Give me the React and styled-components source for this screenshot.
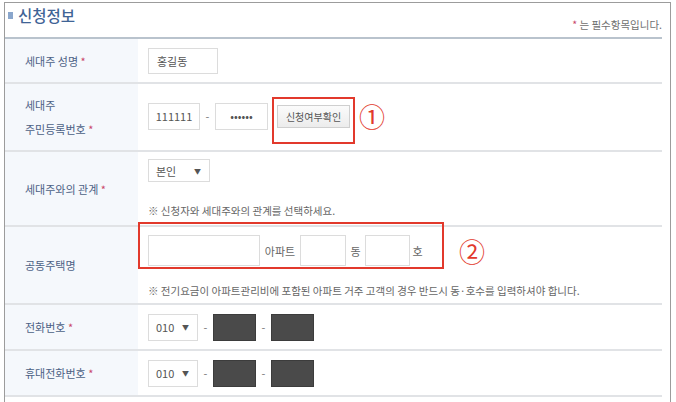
import React from "react"
import styled, { createGlobalStyle } from "styled-components"

const GlobalStyle = createGlobalStyle`
  body {
    margin: 0;
    overflow: hidden;
    background: #fff;
    font-family: "Noto Sans CJK KR", "Noto Sans", sans-serif;
  }
`

const App = () => (
  <>
    <GlobalStyle />
    <Frame>
      <Header>
        <Title>신청정보</Title>
        <Required>
          <Star>*</Star> 는 필수항목입니다.
        </Required>
      </Header>

      <Row $h={43}>
        <Label>
          <span>
            세대주 성명 <Star>*</Star>
          </span>
        </Label>
        <Cell>
          <Line>
            <Input $w={70} $h={26}>홍길동</Input>
          </Line>
        </Cell>
      </Row>

      <Row $h={66}>
        <Label>
          <span>
            세대주
            <br />
            주민등록번호 <Star>*</Star>
          </span>
        </Label>
        <Cell $shift={-2}>
          <Line>
            <Input $w={52} $h={27} $center>
              111111
            </Input>
            <Dash>-</Dash>
            <Input $w={53} $h={27} $center>
              ••••••
            </Input>
            <Marked $inset="-8px -5px -16px -5px">
              <CheckButton>신청여부확인</CheckButton>
            </Marked>
            <Num $gap={9}>①</Num>
          </Line>
        </Cell>
      </Row>

      <Row $h={73}>
        <Label>
          <span>
            세대주와의 관계 <Star>*</Star>
          </span>
        </Label>
        <Cell $top>
          <Line>
            <Select $w={62} $h={23}>
              본인 <Arrow>▼</Arrow>
            </Select>
          </Line>
          <Note>※ 신청자와 세대주와의 관계를 선택하세요.</Note>
        </Cell>
      </Row>

      <Row $h={76}>
        <Label>
          <span>공동주택명</span>
        </Label>
        <Cell $top $pad={8}>
          <Line>
            <Marked $inset="-13px -19px -3px -10px">
              <Line>
                <Input $w={112} $h={31} />
                <Unit $w={40}>아파트</Unit>
                <Input $w={46} $h={31} />
                <Unit $w={19}>동</Unit>
                <Input $w={45} $h={31} />
                <Unit $w={15}>호</Unit>
              </Line>
            </Marked>
            <Num $gap={34}>②</Num>
          </Line>
          <Note $top={17}>
            ※ 전기요금이 아파트관리비에 포함된 아파트 거주 고객의 경우 반드시
            동·호수를 입력하셔야 합니다.
          </Note>
        </Cell>
      </Row>

      {["전화번호", "휴대전화번호"].map((name) => (
        <Row $h={44} key={name}>
          <Label>
            <span>
              {name} <Star>*</Star>
            </span>
          </Label>
          <Cell>
            <Line>
              <Select $w={50} $h={27}>
                010 <Arrow>▼</Arrow>
              </Select>
              <Dash>-</Dash>
              <Masked />
              <Dash>-</Dash>
              <Masked />
            </Line>
          </Cell>
        </Row>
      ))}
    </Frame>
  </>
)

export default App

const Frame = styled.div`
  margin: 2px 0 0 4px;
  width: 657px;
  height: 399px;
  border: 1px solid #9c9c9c;
  border-bottom: none;
  padding-right: 8px;
  background: #fff;
`

const Header = styled.div`
  display: flex;
  justify-content: space-between;
  align-items: flex-start;
  height: 34px;
  border-bottom: 2px solid #b9c3cd;
`

const Title = styled.h2`
  margin: 0;
  padding: 1px 0 0 3px;
  display: flex;
  align-items: center;
  gap: 5px;
  font-size: 15.5px;
  font-weight: 500;
  color: #3f6496;
  line-height: 22px;

  &::before {
    content: "";
    width: 5px;
    height: 7px;
    background: #8aa6cc;
  }
`

const Required = styled.div`
  padding-top: 14px;
  font-size: 10.5px;
  color: #6f6f6f;
`

const Star = styled.span`
  color: #c9476a;
`

const Row = styled.div`
  display: grid;
  grid-template-columns: 133px 1fr;
  height: ${(p) => p.$h}px;
  border-bottom: 2px solid #e1e3e6;
`

const Label = styled.div`
  display: flex;
  align-items: center;
  padding-left: 20px;
  background: #f5f8fc;
  font-size: 11px;
  line-height: 24px;
  color: #4c6185;
`

const Cell = styled.div`
  display: flex;
  flex-direction: column;
  justify-content: ${(p) => (p.$top ? "flex-start" : "center")};
  padding: ${(p) => (p.$top ? `${p.$pad || 7}px` : "0")} 0 0 10px;
  margin-top: ${(p) => p.$shift || 0}px;
  font-size: 11px;
  color: #555;
`

const Line = styled.div`
  display: flex;
  align-items: center;
`

const Input = styled.div`
  box-sizing: border-box;
  display: flex;
  align-items: center;
  justify-content: ${(p) => (p.$center ? "center" : "flex-start")};
  width: ${(p) => p.$w}px;
  height: ${(p) => p.$h}px;
  padding-left: ${(p) => (p.$center ? 0 : 8)}px;
  border: 1px solid #dcdcdc;
  background: #fff;
  font-size: 11px;
  color: #555;
`

const Select = styled(Input)`
  justify-content: space-between;
  padding: 0 8px 0 7px;
`

const Arrow = styled.span`
  font-size: 7px;
  color: #555;
`

const Dash = styled.span`
  width: 15px;
  text-align: center;
  font-size: 11px;
  color: #777;
`

const Unit = styled.span`
  width: ${(p) => p.$w}px;
  text-align: center;
  font-size: 11px;
  color: #666;
`

const Masked = styled.div`
  width: 43px;
  height: 27px;
  box-sizing: border-box;
  background: #4a4a4a;
  border: 1px solid #3c3c3c;
`

const Marked = styled.div`
  position: relative;
  display: flex;
  align-items: center;
  margin-left: ${(p) => p.$left || 9}px;

  &:first-child {
    margin-left: 0;
  }

  &::after {
    content: "";
    position: absolute;
    inset: ${(p) => p.$inset};
    border: 2px solid #e2392c;
    pointer-events: none;
  }
`

const CheckButton = styled.button`
  box-sizing: border-box;
  width: 73px;
  height: 23px;
  padding: 0;
  border: 1px solid #cfcfcf;
  background: linear-gradient(#fbfbfb, #ececec);
  font-family: inherit;
  font-size: 10px;
  color: #555;
`

const Num = styled.span`
  margin-left: ${(p) => p.$gap}px;
  font-size: 26px;
  line-height: 1;
  color: #e2392c;
`

const Note = styled.p`
  margin: ${(p) => p.$top || 21}px 0 0;
  font-size: 10.5px;
  color: #666;
  white-space: nowrap;
`
